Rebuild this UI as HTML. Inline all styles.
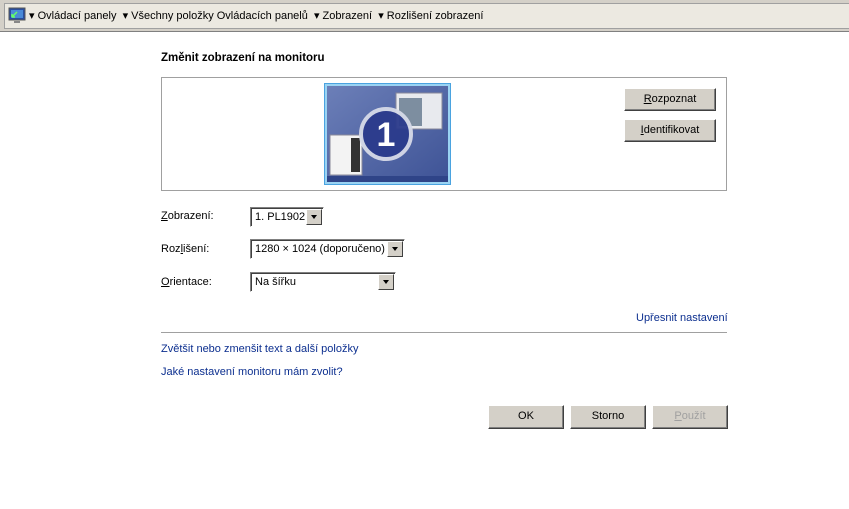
<!DOCTYPE html>
<html><head><meta charset="utf-8"><style>
body{margin:0;width:849px;height:509px;background:#fff;font-family:"Liberation Sans",sans-serif;font-size:11px;color:#000;position:relative;overflow:hidden}
.a{position:absolute;white-space:nowrap}
.bar{position:absolute;left:0;top:0;width:849px;height:31px;background:#d4d0c8;border-bottom:1px solid #808080}
.crumb{position:absolute;left:4px;top:3px;right:0;height:24px;background:#ece9e1;border:1px solid #a0a0a0;border-right:none}
.btn{position:absolute;background:#d4d0c8;border:1px solid;border-color:#fff #404040 #404040 #fff;box-shadow:inset -1px -1px 0 #808080;text-align:center;line-height:21px;font-size:11px}
.sel{position:absolute;border:1px solid;border-color:#808080 #fff #fff #808080;box-shadow:inset 1px 1px 0 #404040;background:#fff;height:18px}
.sel span{position:absolute;left:4px;top:3px}
.arr{position:absolute;right:1px;top:1px;width:16px;height:16px;background:#d4d0c8;border:1px solid;border-color:#fff #404040 #404040 #fff;box-sizing:border-box}
.arr:after{content:"";position:absolute;left:4px;top:5px;border:3px solid transparent;border-top:4px solid #000;border-bottom:0}
a{color:#0c2f8f;text-decoration:none}
</style></head><body>
<div class="bar"><div class="crumb">
<svg class="a" style="left:3px;top:3px" width="18" height="18"><rect x="1" y="1" width="16" height="12" fill="#2a4fa0" stroke="#555"/><rect x="3" y="3" width="12" height="8" fill="#4a8ad8"/><path d="M4 10 L9 5 M4 10 L4 7 M4 10 L7 10" stroke="#6f6" stroke-width="1.5"/><rect x="6" y="14" width="6" height="2" fill="#888"/></svg>
<div class="a" style="left:24px;top:5px">▾ Ovládací panely &nbsp;▾ Všechny položky Ovládacích panelů &nbsp;▾ Zobrazení &nbsp;▾ Rozlišení zobrazení</div>
</div></div>
<div class="a" style="left:161px;top:52px;font-weight:bold;font-size:11.5px">Změnit zobrazení na monitoru</div>
<div class="a" style="left:161px;top:77px;width:564px;height:112px;border:1px solid #a0a0a0"></div>
<svg class="a" style="left:324px;top:83px" width="127" height="102">
<defs><linearGradient id="g" x1="0" y1="0" x2="1" y2="1"><stop offset="0" stop-color="#6c7fb8"/><stop offset="1" stop-color="#3e5396"/></linearGradient></defs>
<rect x="0.5" y="0.5" width="126" height="101" fill="#9ad3f3" stroke="#4aa3e0"/>
<rect x="3" y="3" width="121" height="96" fill="url(#g)"/>
<rect x="3" y="93" width="121" height="6" fill="#2f4488"/>
<rect x="72" y="10" width="46" height="36" fill="#e8eaee" stroke="#889"/><rect x="75" y="15" width="23" height="28" fill="#7d8ea0"/>
<rect x="6" y="52" width="32" height="40" fill="#f3f3f3" stroke="#889"/><rect x="27" y="55" width="9" height="34" fill="#333"/>
<circle cx="62" cy="51" r="25" fill="#2b3b8c" stroke="#d6dae8" stroke-width="4" opacity="0.95"/>
<text x="62" y="63" text-anchor="middle" fill="#fff" font-family="Liberation Sans" font-weight="bold" font-size="34">1</text>
</svg>
<div class="btn" style="left:624px;top:88px;width:90px;height:21px"><u>R</u>ozpoznat</div>
<div class="btn" style="left:624px;top:119px;width:90px;height:21px"><u>I</u>dentifikovat</div>
<div class="a" style="left:161px;top:210px"><u>Z</u>obrazení:</div>
<div class="sel" style="left:250px;top:207px;width:72px"><span>1. PL1902</span><div class="arr"></div></div>
<div class="a" style="left:161px;top:243px">Roz<u>l</u>išení:</div>
<div class="sel" style="left:250px;top:239px;width:153px"><span>1280 × 1024 (doporučeno)</span><div class="arr"></div></div>
<div class="a" style="left:161px;top:276px"><u>O</u>rientace:</div>
<div class="sel" style="left:250px;top:272px;width:144px"><span>Na šířku</span><div class="arr"></div></div>
<div class="a" style="left:636px;top:312px"><a>Upřesnit nastavení</a></div>
<div class="a" style="left:161px;top:332px;width:566px;height:1px;background:#a0a0a0"></div>
<div class="a" style="left:161px;top:343px"><a>Zvětšit nebo zmenšit text a další položky</a></div>
<div class="a" style="left:161px;top:366px"><a>Jaké nastavení monitoru mám zvolit?</a></div>
<div class="btn" style="left:488px;top:405px;width:74px;height:22px">OK</div>
<div class="btn" style="left:570px;top:405px;width:74px;height:22px">Storno</div>
<div class="btn" style="left:652px;top:405px;width:74px;height:22px;color:#a0a0a0"><u>P</u>oužít</div>
</body></html>
